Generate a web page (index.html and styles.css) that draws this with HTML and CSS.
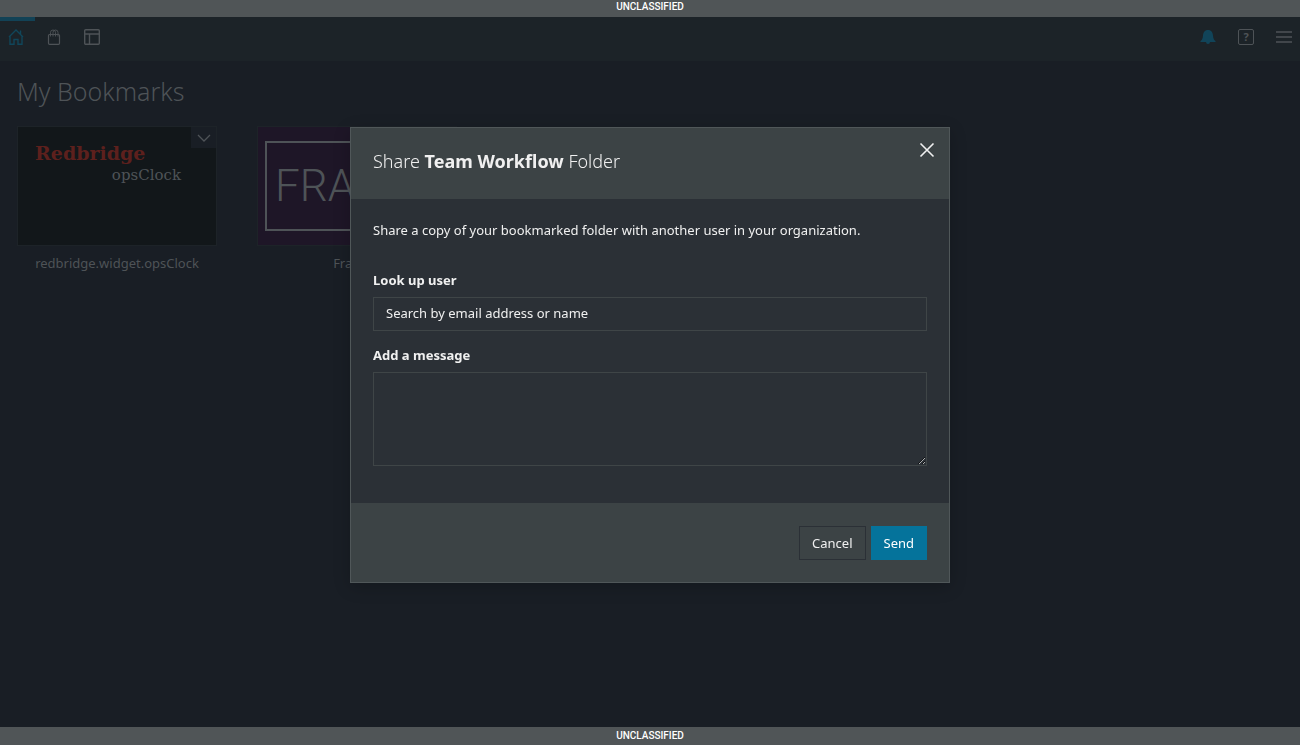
FILE: index.html
```html
<!DOCTYPE html>
<html lang="en">
<head>
<meta charset="utf-8">
<title>My Bookmarks</title>
<link rel="stylesheet" href="styles.css">
</head>
<body>
<div class="app">
  <div class="banner banner-top">UNCLASSIFIED</div>
  <header class="topbar">
    <nav class="nav">
      <button class="nav-item active" aria-label="Home">
        <svg width="16" height="18" viewBox="0 0 16 18" fill="none" stroke="currentColor" stroke-width="1.400"><path d="M1 9 8 2l7 7M2 8.500V16.300H6V11.500h4v4.800h4V8.500M12.500 6V2.500"/></svg>
      </button>
      <button class="nav-item" aria-label="Store">
        <svg width="16" height="18" viewBox="0 0 16 18" fill="none" stroke="currentColor"><rect x="2.500" y="6.500" width="11" height="9.800" rx="1" stroke-width="1.200"/><path d="M4.500 8.500V4.500a2.500 2.500 0 0 1 5 0v4M7 8.500v-4a2.500 2.500 0 0 1 5 0v4" stroke-width=".9"/></svg>
      </button>
      <button class="nav-item" aria-label="Dashboards">
        <svg width="16" height="18" viewBox="0 0 16 18" fill="none" stroke="currentColor" stroke-width="1.400"><rect x=".7" y="1.700" width="14.600" height="14.600" rx="1"/><path d="M1 6h14M5.500 6v10"/></svg>
      </button>
    </nav>
    <div class="nav">
      <button class="nav-item bell" aria-label="Notifications">
        <svg width="16" height="18" viewBox="0 0 16 18" fill="currentColor"><path d="M8 2C4.500 2 3.200 4.500 3 7.500 2.800 10.500 2 12 .5 13v1h15v-1C14 12 13.200 10.500 13 7.500 12.800 4.500 11.500 2 8 2ZM6 14h4a2 2 0 0 1-4 0Z"/></svg>
      </button>
      <button class="nav-item help" aria-label="Help"><span class="help-box">?</span></button>
      <button class="nav-item" aria-label="Menu">
        <svg width="16" height="18" viewBox="0 0 16 18" stroke="currentColor" stroke-width="1.400"><path d="M0 4h16M0 9h16M0 14h16"/></svg>
      </button>
    </div>
  </header>
  <main class="content">
    <h1 class="page-title">My Bookmarks</h1>
    <div class="tiles">
      <figure class="tile">
        <div class="thumb clock">
          <span class="brand">Redbridge</span>
          <span class="product">opsClock</span>
          <button class="tile-menu" aria-label="Bookmark options">
            <svg width="14" height="8" viewBox="0 0 14 8" fill="none" stroke="currentColor" stroke-width="1.300"><path d="m1 1 6 6 6-6"/></svg>
          </button>
        </div>
        <figcaption>redbridge.widget.opsClock</figcaption>
      </figure>
      <figure class="tile">
        <div class="thumb frame"><span class="frame-logo">FRAME</span></div>
        <figcaption>FrameIt</figcaption>
      </figure>
    </div>
  </main>
  <div class="banner">UNCLASSIFIED</div>
</div>

<div class="overlay">
  <form class="modal" role="dialog" aria-labelledby="share-title">
    <header class="modal-header">
      <h2 class="modal-title" id="share-title">Share <strong>Team Workflow</strong> Folder</h2>
      <button class="close" type="button" aria-label="Close">
        <svg width="16" height="16" viewBox="0 0 16 16" stroke="currentColor" stroke-width="1.600"><path d="m1.500 1.500 13 13M14.500 1.500l-13 13"/></svg>
      </button>
    </header>
    <div class="modal-body">
      <p class="intro">Share a copy of your bookmarked folder with another user in your organization.</p>
      <label class="label" for="user">Look up user</label>
      <input class="field" id="user" type="text" placeholder="Search by email address or name">
      <label class="label" for="message">Add a message</label>
      <textarea class="field message" id="message"></textarea>
    </div>
    <footer class="modal-footer">
      <button class="button" type="button">Cancel</button>
      <button class="button primary" type="submit">Send</button>
    </footer>
  </form>
</div>
</body>
</html>
```
FILE: styles.css
```css
* { box-sizing: border-box; }

body {
  margin: 0;
  background: #191e25;
  color: #4e5357;
  font: 13px/20px "Noto Sans", "Open Sans", sans-serif;
}

button { font: inherit; color: inherit; background: none; border: 0; padding: 0; }

.app { display: flex; flex-direction: column; min-height: 100vh; }

.banner {
  height: 18px;
  background: #505557;
  color: #fff;
  font: 500 10px/18px Roboto, sans-serif;
  text-align: center;
}
.banner-top { height: 17px; line-height: 14px; }

.topbar {
  display: flex;
  justify-content: space-between;
  height: 44px;
  background: #1c2328;
}
.nav { display: flex; }
.nav-item {
  display: flex;
  justify-content: center;
  width: 38px;
  padding-top: 11px;
}
.nav .nav-item:first-child { width: 35px; padding-right: 3px; }
.nav-item.active { color: #10465a; box-shadow: inset 0 4px #124256; }
.nav .bell:first-child { width: 38px; padding-right: 0; color: #114459; }
.topbar .nav:last-child { margin-right: -3px; }
.help-box {
  width: 16px;
  height: 16px;
  margin-top: 1px;
  border: 1px solid;
  border-radius: 2px;
  font: bold 11px/14px "Noto Sans", sans-serif;
}

.content { flex: 1; padding: 12px 17px; }
.page-title { margin: 0 0 17px; font: 300 25px/36px "Noto Sans", sans-serif; }
.tiles { display: flex; gap: 40px; }
.tile { width: 200px; margin: 0; text-align: center; }
.thumb {
  position: relative;
  display: flex;
  height: 120px;
  margin-bottom: 7px;
  border: 1px solid #1d2328;
}
.clock {
  flex-direction: column;
  padding: 14px 35px 0 17px;
  background: #12171a;
  font-family: "DejaVu Serif", serif;
}
.brand { color: #5d201d; font-size: 19px; font-weight: bold; line-height: 24px; text-align: left; }
.product { font-size: 15px; line-height: 20px; text-align: right; }
.tile-menu {
  position: absolute;
  top: 0;
  right: 0;
  display: grid;
  place-items: center;
  width: 25px;
  height: 21px;
  background: #191e25;
}
.frame { padding: 14px 7px; background: #1e1627; }
.frame-logo {
  flex: 1;
  padding-left: 8px;
  border: 2px solid;
  font: 300 44px/86px Roboto, sans-serif;
  text-align: left;
}

.overlay {
  position: fixed;
  inset: 0;
  display: flex;
  align-items: flex-start;
  justify-content: center;
  padding-top: 127px;
}
.modal {
  width: 600px;
  max-width: 100%;
  border: 1px solid #505759;
  background: #2b3036;
  color: #f0f0f0;
  box-shadow: 0 4px 16px rgba(0, 0, 0, .2);
}
.modal-header {
  display: flex;
  align-items: flex-start;
  justify-content: space-between;
  padding: 20px 14px 25px 22px;
  background: #3c4345;
}
.modal-title { margin: 0; font: 300 18px/26px "Noto Sans", sans-serif; }
.modal-title strong { font-weight: bold; }
.close { display: flex; margin-top: -6px; }
.modal-body { padding: 21px 22px 37px; }
.intro { margin: 0 0 30px; }
.label { display: block; margin-bottom: 7px; font-weight: bold; }
.field {
  display: block;
  width: 100%;
  height: 34px;
  margin: 0 0 14px;
  padding: 5px 12px 7px;
  border: 1px solid #3f4547;
  border-radius: 0;
  background: #2b3036;
  color: #f0f0f0;
  font: inherit;
}
.field::placeholder { color: #f0f0f0; opacity: 1; }
.message { height: 94px; margin: 0; resize: vertical; }
.modal-footer {
  display: flex;
  justify-content: flex-end;
  gap: 5px;
  padding: 23px 22px 22px;
  background: #3c4345;
}
.button { height: 34px; padding: 0 12px; border: 1px solid #2b3036; line-height: 30px; }
.primary { border-color: #05739b; background: #05739b; color: #fff; }
```
